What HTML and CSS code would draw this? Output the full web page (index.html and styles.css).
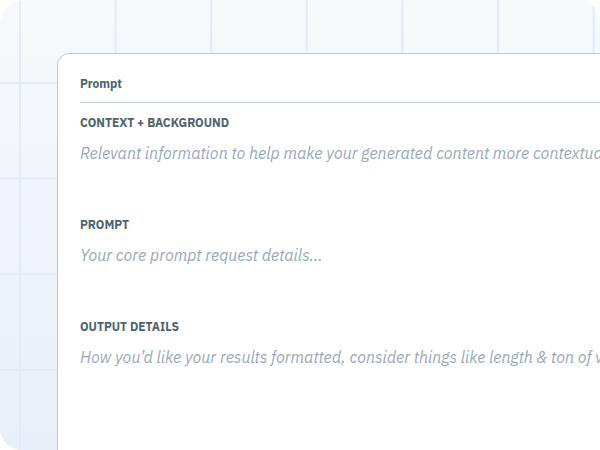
FILE: index.html
```html
<!DOCTYPE html>
<html>
<head>
<meta charset="utf-8">
<link rel="stylesheet" href="styles.css">
</head>
<body>
<div class="panel">
  <div class="card">
    <div class="card-head">Prompt</div>
    <div class="section">
      <div class="label">CONTEXT + BACKGROUND</div>
      <div class="placeholder">Relevant information to help make your generated content more contextual and useful</div>
    </div>
    <div class="section">
      <div class="label">PROMPT</div>
      <div class="placeholder">Your core prompt request details...</div>
    </div>
    <div class="section">
      <div class="label">OUTPUT DETAILS</div>
      <div class="placeholder">How you’d like your results formatted, consider things like length &amp; ton of voice</div>
    </div>
  </div>
</div>
</body>
</html>
```
FILE: styles.css
```css
html, body {
  margin: 0;
  padding: 0;
  background: #ffffff;
}
body {
  width: 600px;
  height: 450px;
  overflow: hidden;
  font-family: "IBM Plex Sans", "Noto Sans", "Open Sans", sans-serif;
}
.panel {
  width: 600px;
  height: 450px;
  box-sizing: border-box;
  overflow: hidden;
  border-radius: 24px 22px 0 22px;
  padding: 53px 0 0 57px;
  background-color: #f2f6fb;
  background-image:
    linear-gradient(to right, #e2ecf9 2px, transparent 2px),
    linear-gradient(to bottom, #e2ecf9 2px, transparent 2px),
    linear-gradient(to bottom, #f7f9fc 0%, #e9eff8 100%);
  background-size: 95.6px 100%, 100% 95.6px, 100% 100%;
  background-position: 19px 0, 0 82px, 0 0;
}
.card {
  width: 620px;
  height: 440px;
  box-sizing: border-box;
  background: #ffffff;
  border: 1px solid #b9cbdb;
  border-radius: 12px 0 0 0;
  padding: 22px 0 0 22px;
  white-space: nowrap;
}
.card-head {
  font-size: 12px;
  line-height: 16px;
  font-weight: 700;
  color: #4d6273;
  padding-bottom: 10px;
  border-bottom: 1px solid #b9cbdb;
  margin-bottom: 12px;
}
.section {
  margin-bottom: 54px;
}
.label {
  font-size: 12px;
  line-height: 16px;
  font-weight: 700;
  color: #4d6273;
  margin-bottom: 12px;
}
.placeholder {
  font-size: 16px;
  line-height: 20px;
  font-style: italic;
  color: #97a9b8;
}
```
